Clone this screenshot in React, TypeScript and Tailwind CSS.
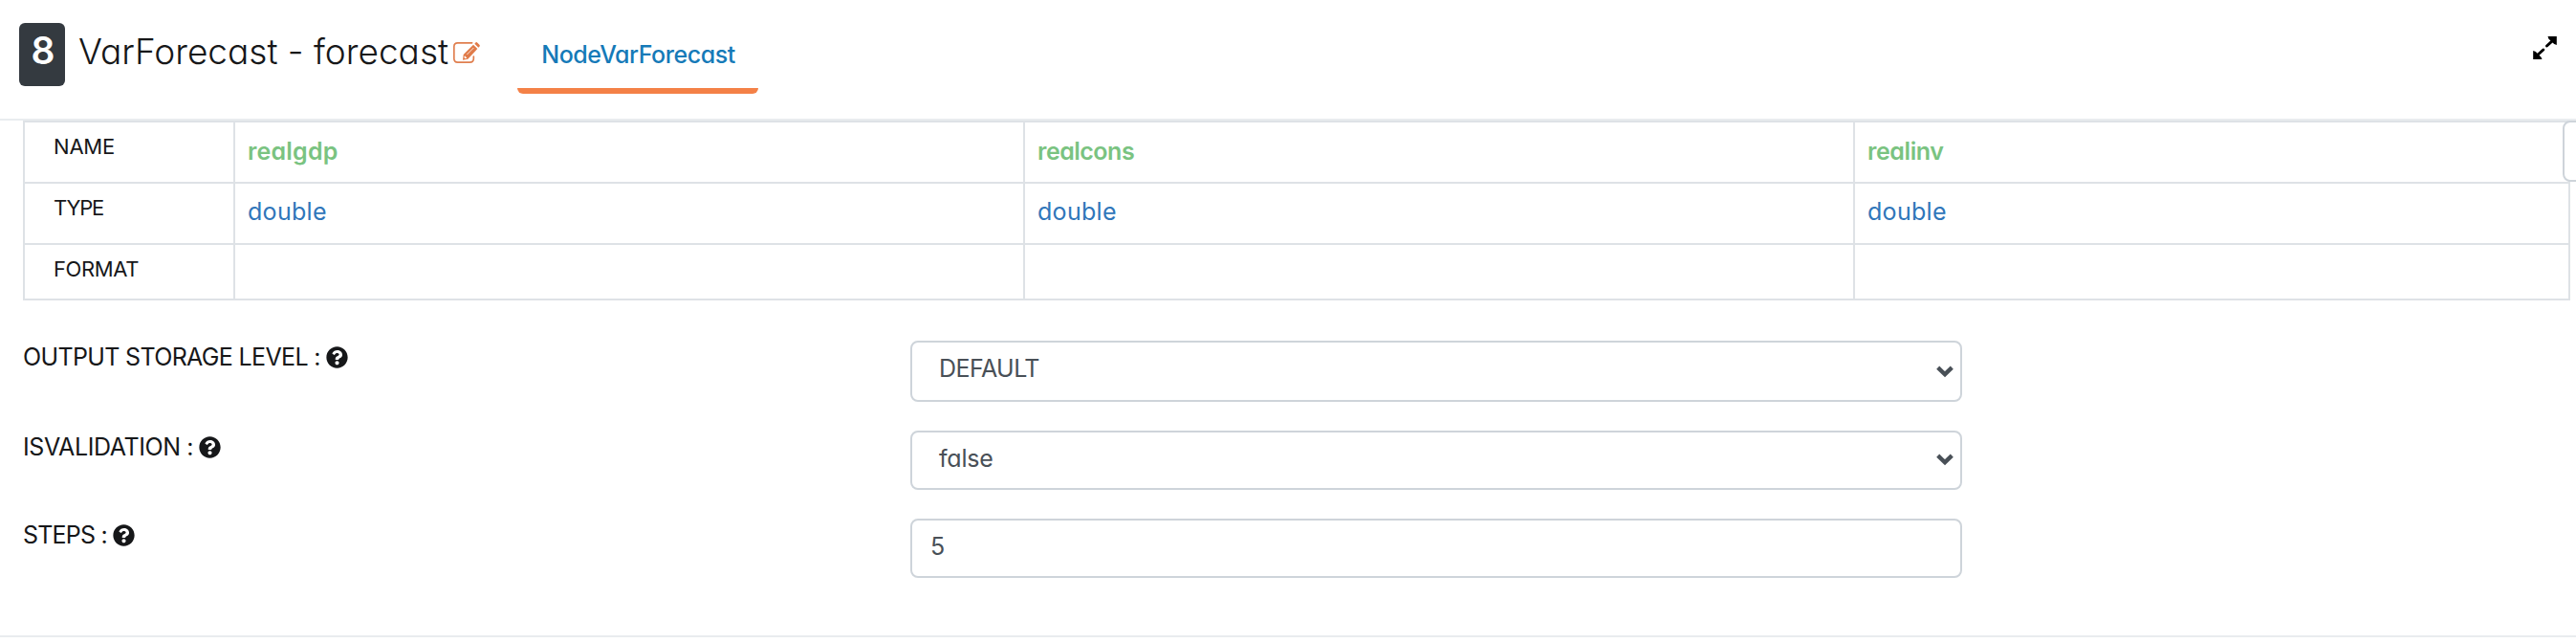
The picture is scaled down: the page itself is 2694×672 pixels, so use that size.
import type { ReactNode } from "react";
import { FaQuestionCircle } from "react-icons/fa";

function EditIcon() {
  return (
    <svg viewBox="0 0 84 66" className="h-[22px] w-7" fill="none">
      <path
        d="M59 2.5H14Q2.5 2.5 2.5 14V52Q2.5 63.5 14 63.5H52Q64 63.5 64 52V45"
        stroke="#e07f4f"
        strokeWidth="5"
        strokeLinecap="round"
      />
      <path d="M30 56L32 39L63 8L76 21L46 53Z" fill="#e07b49" />
      <path d="M67 5L71 1Q73 -1 76 2L82 8Q85 11 82 14L79 17Z" fill="#e07b49" />
      <path d="M43 39L64 18" stroke="#fbe3d7" strokeWidth="3" />
      <path d="M36 43L43 50L38 52L34 48Z" fill="#fff" />
    </svg>
  );
}

function ExpandIcon() {
  return (
    <svg viewBox="0 0 74 72" className="h-6 w-[25px]">
      <path d="M46 0H74V27L66 24L49 8Z" stroke="none" />
      <path d="M0 45V72H28L25 65L8 48Z" stroke="none" />
      <path d="M64 11L43 30M12 60L32 42" stroke="#000" strokeWidth="9" strokeLinecap="round" />
    </svg>
  );
}

function Chevron() {
  return (
    <svg viewBox="0 0 18 13" className="h-[13px] w-[18px]" fill="none">
      <path d="M1.7 2.2L9 9.2L16.3 2.2" stroke="#495057" strokeWidth="4.4" />
    </svg>
  );
}

function Field({ label, spacing, children, gap }: { label: string; spacing: string; children: ReactNode; gap: string }) {
  return (
    <div className={`flex items-start ${gap}`}>
      <div className="flex w-[928px] items-center pt-1 text-[25px] leading-[26px] text-[#161719]">
        <span className={spacing}>{label}</span>
        <FaQuestionCircle className="ml-1.5 size-[23px]" />
      </div>
      {children}
    </div>
  );
}

const columns = [
  { name: "realgdp", spacing: "tracking-[0.2px]", width: "w-[826px]" },
  { name: "realcons", spacing: "tracking-[-0.5px]", width: "w-[868px]" },
  { name: "realinv", spacing: "tracking-[-0.4px]", width: "w-[748px]" },
];

const head = "border-r-2 border-[#dee2e6] pl-[30px] pt-3 text-[22px] leading-[26px] text-[#161719]";
const cell = "border-r-2 border-[#dee2e6] pl-[13px] text-[25px] leading-[28px]";
const box = "w-[1100px] rounded-lg border-2 border-[#ced4da] bg-white text-[25px] text-[#495057]";

export default function App() {
  return (
    <div className="h-[672px] w-[2694px] overflow-hidden bg-white font-['Inter',sans-serif] [font-feature-settings:'cv11']">
      <header className="flex h-[126px] items-start border-b-2 border-[#e9ecef] pl-5">
        <div className="mt-6 h-[66px] w-12 rounded-md bg-[#343a40] pt-[9px] text-center text-[39px] font-semibold leading-[40px] tracking-[-2px] text-white">
          8
        </div>
        <h1 className="ml-[14px] mt-[33px] w-[391px] whitespace-nowrap text-[37px] font-light leading-[42px] text-[#161719]">
          VarForecast - forecast
        </h1>
        <div className="ml-px mt-11">
          <EditIcon />
        </div>
        <div className="ml-[39px] h-[98px] w-[252px] rounded-b-[6px] border-b-[6px] border-[#f48147] pl-px pt-[43px] text-center text-[25px] font-medium leading-[28px] tracking-[-0.45px] text-[#157ab8]">
          NodeVarForecast
        </div>
        <div className="ml-auto mr-5 mt-[38px]">
          <ExpandIcon />
        </div>
      </header>

      <main className="h-[540px] border-b-2 border-[#e9ecef] pl-6">
        <div className="relative w-[2664px] border-l-2 border-t-2 border-[#dee2e6]">
          <div className="flex h-16 border-b-2 border-[#dee2e6]">
            <div className={`${head} w-[220px] tracking-[-0.2px]`}>NAME</div>
            {columns.map((c) => (
              <div key={c.name} className={`${cell} ${c.width} ${c.spacing} pt-4 font-semibold text-[#7ac381]`}>
                {c.name}
              </div>
            ))}
          </div>
          <div className="flex h-16 border-b-2 border-[#dee2e6]">
            <div className={`${head} w-[220px] tracking-[-1.2px]`}>TYPE</div>
            {columns.map((c) => (
              <div key={c.name} className={`${cell} ${c.width} pt-[15px] tracking-[0.3px] text-[#2f76ba]`}>
                double
              </div>
            ))}
          </div>
          <div className="flex h-[58px] border-b-2 border-[#dee2e6]">
            <div className={`${head} w-[220px] tracking-[-0.4px]`}>FORMAT</div>
            {columns.map((c) => (
              <div key={c.name} className={`${cell} ${c.width}`} />
            ))}
          </div>
          <div className="absolute -top-0.5 left-[2654px] h-16 w-20 rounded-lg border-2 border-[#ced4da] bg-white" />
        </div>

        <Field label="OUTPUT STORAGE LEVEL :" spacing="tracking-[-0.65px]" gap="mt-[42px]">
          <div className={`${box} flex h-16 items-start justify-between pl-[28px] pr-[7px]`}>
            <span className="pt-[13px] leading-[28px] tracking-[-0.55px]">DEFAULT</span>
            <span className="mt-6">
              <Chevron />
            </span>
          </div>
        </Field>
        <Field label="ISVALIDATION :" spacing="tracking-[-0.4px]" gap="mt-[30px]">
          <div className={`${box} flex h-[62px] items-start justify-between pl-[28px] pr-[7px]`}>
            <span className="pt-[13px] leading-[28px] tracking-[-0.2px]">false</span>
            <span className="mt-[22px]">
              <Chevron />
            </span>
          </div>
        </Field>
        <Field label="STEPS :" spacing="tracking-[-0.8px]" gap="mt-[30px]">
          <div className={`${box} h-[62px] pl-[19px] pt-[13px] leading-[28px]`}>5</div>
        </Field>
      </main>
    </div>
  );
}
